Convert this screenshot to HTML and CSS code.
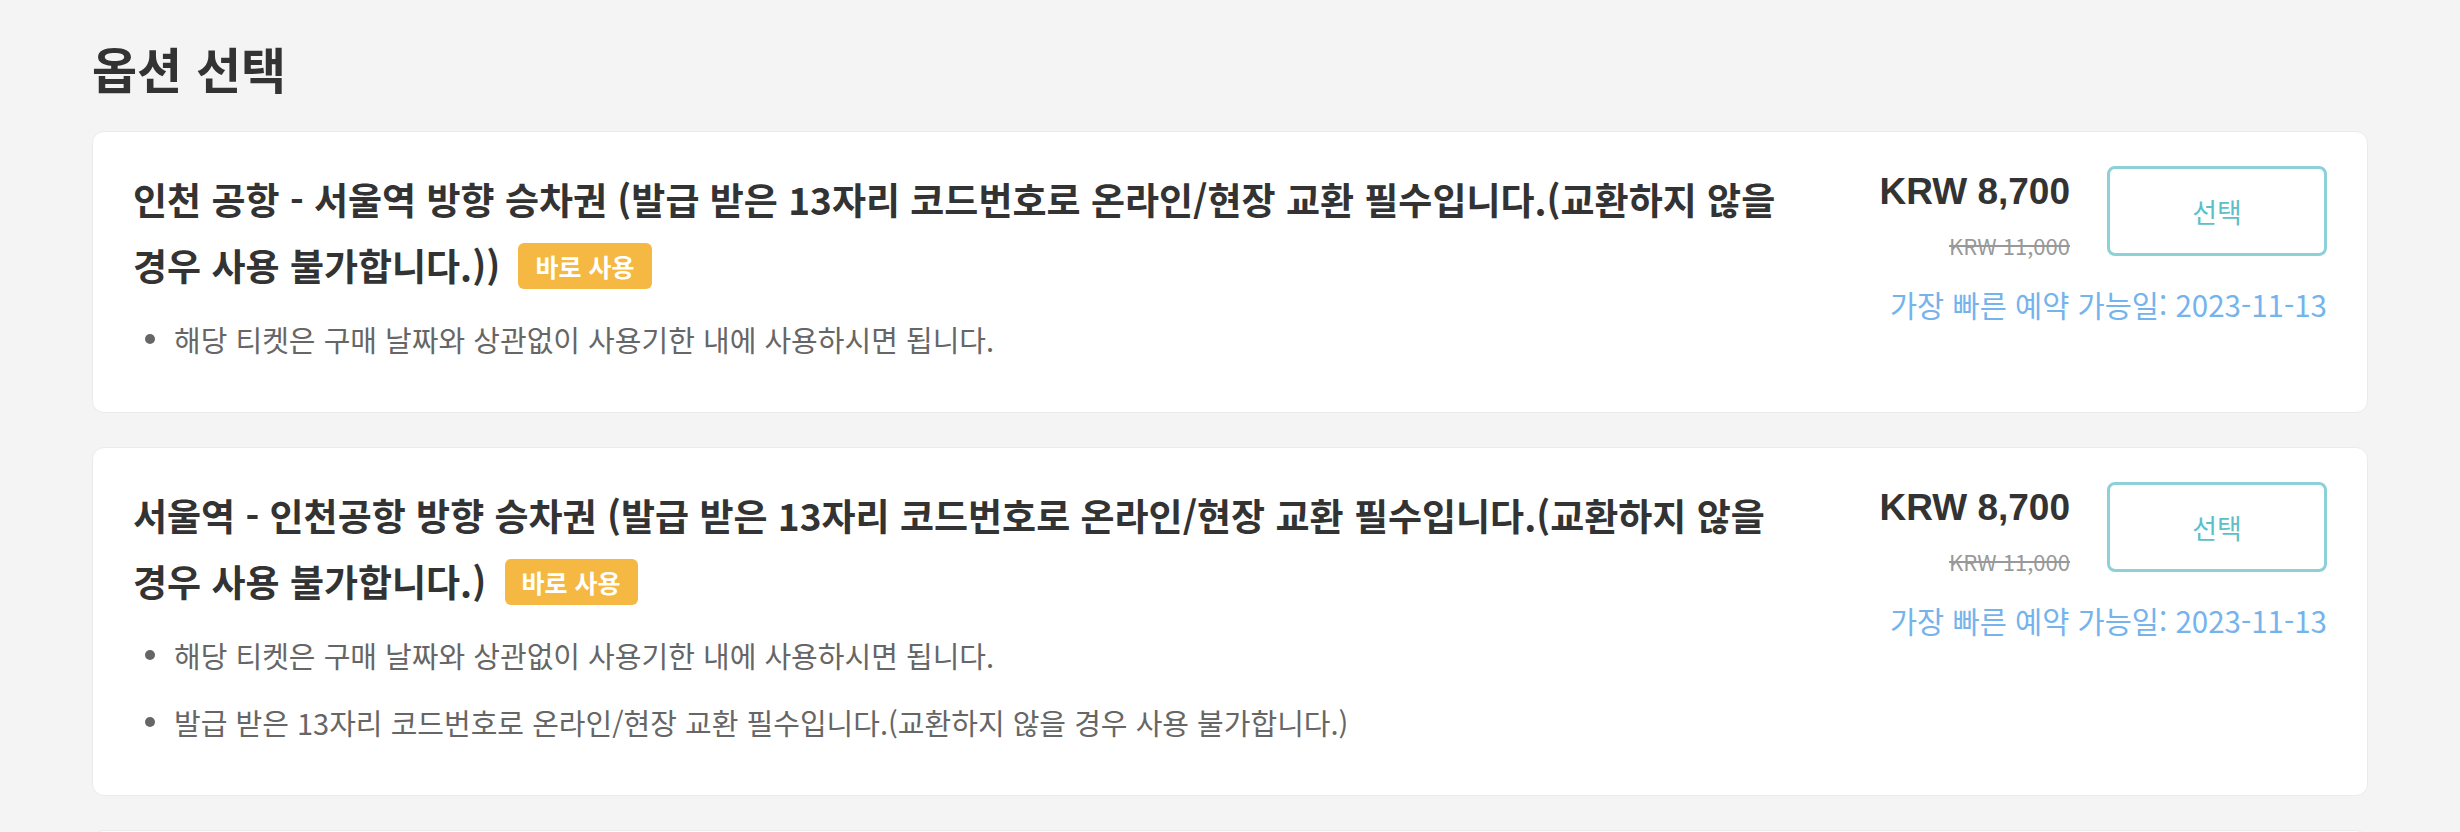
FILE: index.html
```html
<!DOCTYPE html>
<html lang="ko">
<head>
    <meta charset="UTF-8">
    <meta name="viewport" content="width=device-width, initial-scale=1.0">
    <title>옵션 선택</title>
    <link rel="stylesheet" href="styles.css">
</head>
<body>

    <main class="page">
        <h2 class="page-title">옵션 선택</h2>

        <div class="option-list">
            <div class="option-card">
                <div class="option-info">
                    <h3 class="option-name">인천 공항 - 서울역 방향 승차권 (발급 받은 13자리 코드번호로 온라인/현장 교환 필수입니다.(교환하지 않을 경우 사용 불가합니다.)) <span class="badge">바로 사용</span></h3>
                    <ul class="option-notes">
                        <li>해당 티켓은 구매 날짜와 상관없이 사용기한 내에 사용하시면 됩니다.</li>
                    </ul>
                </div>
                <div class="option-side">
                    <div class="option-buy">
                        <div class="price">
                            <div class="price-now">KRW 8,700</div>
                            <div class="price-old">KRW 11,000</div>
                        </div>
                        <button class="select-btn">선택</button>
                    </div>
                    <p class="earliest">가장 빠른 예약 가능일: 2023-11-13</p>
                </div>
            </div>

            <div class="option-card">
                <div class="option-info">
                    <h3 class="option-name">서울역 - 인천공항 방향 승차권 (발급 받은 13자리 코드번호로 온라인/현장 교환 필수입니다.(교환하지 않을 경우 사용 불가합니다.) <span class="badge">바로 사용</span></h3>
                    <ul class="option-notes">
                        <li>해당 티켓은 구매 날짜와 상관없이 사용기한 내에 사용하시면 됩니다.</li>
                        <li>발급 받은 13자리 코드번호로 온라인/현장 교환 필수입니다.(교환하지 않을 경우 사용 불가합니다.)</li>
                    </ul>
                </div>
                <div class="option-side">
                    <div class="option-buy">
                        <div class="price">
                            <div class="price-now">KRW 8,700</div>
                            <div class="price-old">KRW 11,000</div>
                        </div>
                        <button class="select-btn">선택</button>
                    </div>
                    <p class="earliest">가장 빠른 예약 가능일: 2023-11-13</p>
                </div>
            </div>

            <div class="option-card">
                <div class="option-info">
                    <h3 class="option-name">인천 공항 - 서울역 왕복 승차권 <span class="badge">바로 사용</span></h3>
                    <ul class="option-notes">
                        <li>해당 티켓은 구매 날짜와 상관없이 사용기한 내에 사용하시면 됩니다.</li>
                    </ul>
                </div>
                <div class="option-side">
                    <div class="option-buy">
                        <div class="price">
                            <div class="price-now">KRW 16,900</div>
                            <div class="price-old">KRW 22,000</div>
                        </div>
                        <button class="select-btn">선택</button>
                    </div>
                    <p class="earliest">가장 빠른 예약 가능일: 2023-11-13</p>
                </div>
            </div>
        </div>
    </main>

</body>
</html>
```

FILE: styles.css
```css
body { margin: 0; background: #f4f4f4; font-family: "Noto Sans CJK KR", sans-serif; color: #333; }
.page { padding: 35px 92px 40px; }
.page-title { margin: 0 0 31px; font-size: 49px; line-height: 65px; font-weight: 700; color: #333; }

.option-list { display: flex; flex-direction: column; gap: 34px; }
.option-card { display: flex; gap: 50px; padding: 34px 40px 51px; background: #fff; border: 1px solid #ebebeb; border-radius: 12px; }

.option-info { flex: 1; min-width: 0; }
.option-name { margin: 0; font-size: 37px; line-height: 66px; font-weight: 700; color: #333; word-break: keep-all; }
.badge { display: inline-block; vertical-align: 4px; margin-left: 8px; padding: 0 17px; height: 46px; line-height: 46px; font-size: 25px; font-weight: 700; color: #fff; background: #f5b842; border-radius: 6px; }

.option-notes { list-style: none; margin: 19px 0 0; padding: 0; display: flex; flex-direction: column; gap: 23px; }
.option-notes li { display: flex; align-items: center; gap: 19px; padding-left: 12px; font-size: 29px; line-height: 44px; color: #666; }
.option-notes li::before { content: ""; flex: none; width: 10px; height: 10px; border-radius: 50%; background: #666; }

.option-side { flex: none; display: flex; flex-direction: column; align-items: flex-end; }
.option-buy { display: flex; align-items: flex-start; gap: 37px; }
.price { text-align: right; padding-top: 4px; }
.price-now { font-family: "Liberation Sans", Arial, sans-serif; font-size: 37px; line-height: 44px; font-weight: 700; color: #333; }
.price-old { margin-top: 15px; font-size: 22px; line-height: 32px; color: #999; text-decoration: line-through; text-decoration-thickness: 2px; }
.select-btn { box-sizing: border-box; width: 220px; height: 90px; background: #fff; border: 3px solid #8dd0d8; border-radius: 8px; font-family: "Noto Sans CJK KR", sans-serif; font-size: 27px; color: #5cbfc9; cursor: pointer; }
.earliest { margin: 23px 0 0; font-size: 29.5px; line-height: 40px; color: #74b3ec; }
```
